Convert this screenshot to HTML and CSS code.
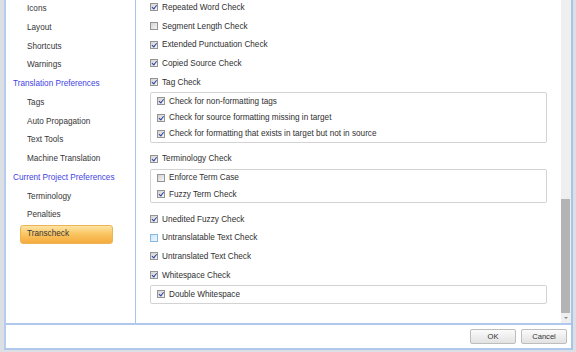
FILE: index.html
```html
<!DOCTYPE html>
<html lang="en">

<head>
    <meta charset="UTF-8">
    <meta name="viewport" content="width=device-width, initial-scale=1.0">
    <title>Options - Transcheck</title>
    <link rel="stylesheet" href="styles.css">
</head>

<body>

    <div class="window">

        <div class="panes">

            <ul class="nav">
                <li class="item">Icons</li>
                <li class="item">Layout</li>
                <li class="item">Shortcuts</li>
                <li class="item">Warnings</li>
                <li class="heading">Translation Preferences</li>
                <li class="item">Tags</li>
                <li class="item">Auto Propagation</li>
                <li class="item">Text Tools</li>
                <li class="item">Machine Translation</li>
                <li class="heading">Current Project Preferences</li>
                <li class="item">Terminology</li>
                <li class="item">Penalties</li>
                <li class="item active">Transcheck</li>
            </ul>

            <div class="main">

                <div class="content">
                    <div class="list">

                        <label class="check on"><span class="box"></span>Repeated Word Check</label>
                        <label class="check"><span class="box"></span>Segment Length Check</label>
                        <label class="check on"><span class="box"></span>Extended Punctuation Check</label>
                        <label class="check on"><span class="box"></span>Copied Source Check</label>
                        <label class="check on"><span class="box"></span>Tag Check</label>

                        <div class="group">
                            <label class="check on"><span class="box"></span>Check for non-formatting tags</label>
                            <label class="check on"><span class="box"></span>Check for source formatting missing in target</label>
                            <label class="check on"><span class="box"></span>Check for formatting that exists in target but not in source</label>
                        </div>

                        <label class="check on"><span class="box"></span>Terminology Check</label>

                        <div class="group">
                            <label class="check"><span class="box"></span>Enforce Term Case</label>
                            <label class="check on"><span class="box"></span>Fuzzy Term Check</label>
                        </div>

                        <label class="check on"><span class="box"></span>Unedited Fuzzy Check</label>
                        <label class="check hover"><span class="box"></span>Untranslatable Text Check</label>
                        <label class="check on"><span class="box"></span>Untranslated Text Check</label>
                        <label class="check on"><span class="box"></span>Whitespace Check</label>

                        <div class="group">
                            <label class="check on"><span class="box"></span>Double Whitespace</label>
                        </div>

                    </div>
                </div>

                <div class="scrollbar">
                    <div class="thumb"></div>
                    <div class="arrow"></div>
                </div>

            </div>

        </div>

        <div class="footer">
            <button type="button">OK</button>
            <button type="button">Cancel</button>
        </div>

    </div>

</body>

</html>
```

FILE: styles.css
```css
body {
    margin: 0;
    padding: 0;
    background: #dcdfe3;
    font-family: 'Liberation Sans', Arial, sans-serif;
    font-size: 8.2px;
    color: #2f2f2f;
    width: 576px;
    height: 352px;
    overflow: hidden;
}

.window {
    margin-left: 4px;
    width: 569px;
    height: 350px;
    box-sizing: border-box;
    background: #fff;
    border-left: 2px solid #b6ccee;
    border-right: 2px solid #a9c3ec;
    border-bottom: 2px solid #afc7ec;
    display: flex;
    flex-direction: column;
}

.panes {
    height: 325px;
    box-sizing: border-box;
    border-bottom: 2px solid #b0c8ec;
    display: flex;
    overflow: hidden;
}

/* left navigation */

.nav {
    list-style: none;
    margin: 0;
    padding: 0;
    width: 130px;
    box-sizing: border-box;
    border-right: 1px solid #a9c3ec;
}

.nav li {
    height: 18.75px;
    line-height: 18.75px;
    box-sizing: border-box;
    white-space: nowrap;
}

.heading {
    padding-left: 7px;
    color: #3f3fe4;
}

.item {
    margin-left: 14px;
    width: 93px;
    padding-left: 7px;
    color: #363636;
}

.item.active {
    background: linear-gradient(#fde4a4, #fac664 45%, #f5ab3c);
    border: 1px solid #eab457;
    border-radius: 3px;
    padding-left: 6px;
    line-height: 16.75px;
}

/* right side */

.main {
    flex: 1;
    display: flex;
}

.content {
    flex: 1;
    padding: 0 14px;
    overflow: hidden;
}

.list {
    margin-top: -2px;
    display: flex;
    flex-direction: column;
}

.check {
    height: 18.7px;
    display: flex;
    align-items: center;
    white-space: nowrap;
}

.box {
    position: relative;
    width: 8px;
    height: 8px;
    box-sizing: border-box;
    margin-right: 4px;
    border: 1px solid #949494;
    background: linear-gradient(135deg, #d2d2d2, #f6f6f6);
    flex: none;
}

.check.on .box::after {
    content: "";
    position: absolute;
    left: 2px;
    top: 0;
    width: 1.6px;
    height: 3.6px;
    border: solid #2b42a0;
    border-width: 0 1.4px 1.4px 0;
    transform: rotate(38deg);
}

.check.hover .box {
    border-color: #86b9e2;
    background: linear-gradient(135deg, #cfe7f8, #eef7fd);
}

.group {
    margin: 0.7px 0 6.4px;
    padding-left: 6px;
    border: 1px solid #d3d3d3;
    border-radius: 2px;
}

.group .check {
    height: 16.3px;
}

/* scrollbar */

.scrollbar {
    width: 10px;
    background: #efefef;
    display: flex;
    flex-direction: column;
    justify-content: flex-end;
}

.thumb {
    height: 114px;
    margin: 0 1px 0 0;
    background: #b4b4b4;
}

.arrow {
    height: 10px;
    display: flex;
    justify-content: center;
    align-items: center;
}

.arrow::before {
    content: "";
    border-left: 2px solid transparent;
    border-right: 2px solid transparent;
    border-top: 2px solid #8a8a8a;
}

/* footer */

.footer {
    flex: 1;
    display: flex;
    justify-content: flex-end;
    align-items: flex-start;
    gap: 5px;
    padding: 4px 4px 0 0;
}

.footer button {
    width: 46px;
    height: 15px;
    padding: 0;
    font-family: inherit;
    font-size: 7.6px;
    color: #333;
    border: 1px solid #bdbdbd;
    border-radius: 2px;
    background: linear-gradient(#fbfbfb, #e2e2e2);
}
```
